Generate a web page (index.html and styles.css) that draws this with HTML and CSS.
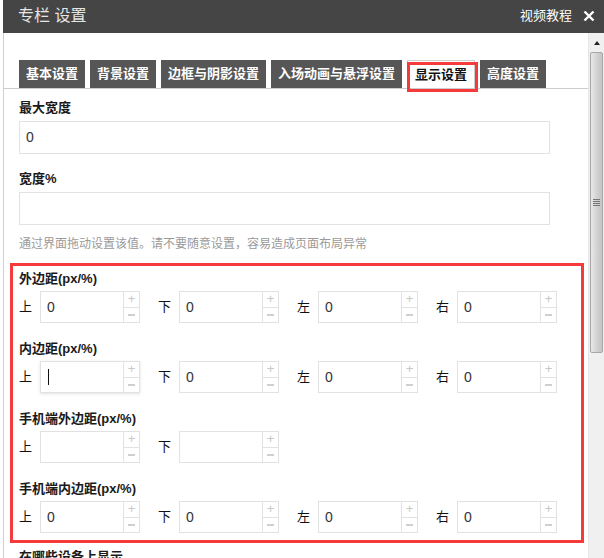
FILE: index.html
```html
<!DOCTYPE html>
<html>
    <head>
        <meta charset="utf-8">
        <link rel="stylesheet" href="styles.css">
    </head>

    <body>
        <div class="dialog">
            <div class="titlebar">
                <span class="title">专栏 设置</span>
                <span class="tools">
                    <span class="help-link">视频教程</span>
                    <svg class="close" width="12" height="12" viewBox="0 0 12 12">
                        <path d="M1.5 1.5 L10.5 10.5 M10.5 1.5 L1.5 10.5" stroke="#fff" stroke-width="2.4" fill="none"/>
                    </svg>
                </span>
            </div>

            <div class="main">
                <div class="content">
                    <div class="tabs">
                        <span class="tab">基本设置</span>
                        <span class="tab">背景设置</span>
                        <span class="tab">边框与阴影设置</span>
                        <span class="tab">入场动画与悬浮设置</span>
                        <span class="tab active">显示设置</span>
                        <span class="tab">高度设置</span>
                    </div>

                    <div class="form">
                        <div class="field">
                            <label>最大宽度</label>
                            <div class="text-input">0</div>
                        </div>
                        <div class="field">
                            <label>宽度%</label>
                            <div class="text-input"></div>
                            <div class="helptext">通过界面拖动设置该值。请不要随意设置，容易造成页面布局异常</div>
                        </div>

                        <div class="marked">
                            <div class="group">
                                <label>外边距(px/%)</label>
                                <div class="spin-row">
                                    <span class="side">上</span><div class="spin"><span class="val">0</span><span class="btns"><span class="plus">+</span><span class="minus"><i></i></span></span></div>
                                    <span class="side">下</span><div class="spin"><span class="val">0</span><span class="btns"><span class="plus">+</span><span class="minus"><i></i></span></span></div>
                                    <span class="side">左</span><div class="spin"><span class="val">0</span><span class="btns"><span class="plus">+</span><span class="minus"><i></i></span></span></div>
                                    <span class="side">右</span><div class="spin"><span class="val">0</span><span class="btns"><span class="plus">+</span><span class="minus"><i></i></span></span></div>
                                </div>
                            </div>
                            <div class="group">
                                <label>内边距(px/%)</label>
                                <div class="spin-row">
                                    <span class="side">上</span><div class="spin focused"><span class="val"><b class="caret"></b></span><span class="btns"><span class="plus">+</span><span class="minus"><i></i></span></span></div>
                                    <span class="side">下</span><div class="spin"><span class="val">0</span><span class="btns"><span class="plus">+</span><span class="minus"><i></i></span></span></div>
                                    <span class="side">左</span><div class="spin"><span class="val">0</span><span class="btns"><span class="plus">+</span><span class="minus"><i></i></span></span></div>
                                    <span class="side">右</span><div class="spin"><span class="val">0</span><span class="btns"><span class="plus">+</span><span class="minus"><i></i></span></span></div>
                                </div>
                            </div>
                            <div class="group">
                                <label>手机端外边距(px/%)</label>
                                <div class="spin-row">
                                    <span class="side">上</span><div class="spin"><span class="val"></span><span class="btns"><span class="plus">+</span><span class="minus"><i></i></span></span></div>
                                    <span class="side">下</span><div class="spin"><span class="val"></span><span class="btns"><span class="plus">+</span><span class="minus"><i></i></span></span></div>
                                </div>
                            </div>
                            <div class="group">
                                <label>手机端内边距(px/%)</label>
                                <div class="spin-row">
                                    <span class="side">上</span><div class="spin"><span class="val">0</span><span class="btns"><span class="plus">+</span><span class="minus"><i></i></span></span></div>
                                    <span class="side">下</span><div class="spin"><span class="val">0</span><span class="btns"><span class="plus">+</span><span class="minus"><i></i></span></span></div>
                                    <span class="side">左</span><div class="spin"><span class="val">0</span><span class="btns"><span class="plus">+</span><span class="minus"><i></i></span></span></div>
                                    <span class="side">右</span><div class="spin"><span class="val">0</span><span class="btns"><span class="plus">+</span><span class="minus"><i></i></span></span></div>
                                </div>
                            </div>
                        </div>

                        <div class="field last">
                            <label>在哪些设备上显示</label>
                        </div>
                    </div>
                </div>

                <div class="scrollbar">
                    <span class="arrow-up"></span>
                    <div class="thumb">
                        <span class="grip"></span>
                    </div>
                </div>
            </div>
        </div>
    </body>
</html>
```

FILE: styles.css
```css
html, body {
    margin: 0;
    height: 100%;
    overflow: hidden;
    background: #fff;
}

body {
    font-family: "Liberation Sans", "Noto Sans CJK SC", sans-serif;
    font-size: 13px;
    color: #222;
}

.dialog {
    margin-left: 3px;
    height: 558px;
    display: flex;
    flex-direction: column;
}

.titlebar {
    height: 33px;
    box-sizing: border-box;
    flex: none;
    background: #454545;
    display: flex;
    align-items: center;
    justify-content: space-between;
    padding: 0 9px 2px 15px;
}

.title {
    font-size: 16px;
    color: #e6e6e6;
    line-height: 20px;
}

.tools {
    display: flex;
    align-items: center;
    gap: 11px;
}

.help-link {
    font-size: 13px;
    color: #fff;
    line-height: 18px;
}

.close {
    display: block;
}

.main {
    flex: 1;
    display: flex;
    min-height: 0;
}

.content {
    flex: 1;
    border-left: 1px solid #cfcfcf;
    overflow: hidden;
}

.tabs {
    margin-top: 27px;
    padding-left: 15px;
    display: flex;
    gap: 5px;
    border-bottom: 1px solid #cccccc;
}

.tab {
    height: 28px;
    line-height: 28px;
    padding: 0 7px;
    background: #565656;
    color: #fff;
    font-weight: bold;
    font-size: 13px;
}

.tab.active {
    position: relative;
    background: #fff;
    color: #111;
    height: 28px;
    line-height: 27px;
    border: 1px solid #cccccc;
    border-bottom: none;
    margin-bottom: -1px;
    box-sizing: border-box;
    margin-top: 0;
}

/* red highlight round the selected tab */
.tab.active::after {
    content: "";
    position: absolute;
    left: -1px;
    right: -4px;
    top: 1px;
    bottom: -4px;
    border: 3px solid #f43a3a;
}

.form {
    padding: 0 15px;
}

label {
    display: block;
    font-weight: bold;
    font-size: 13px;
    line-height: 18px;
    color: #1a1a1a;
}

.field label {
    margin-top: 10px;
}

.field + .field label {
    margin-top: 16px;
}

.text-input {
    margin-top: 4px;
    width: 531px;
    height: 33px;
    box-sizing: border-box;
    border: 1px solid #e2e2e2;
    padding-left: 6px;
    line-height: 31px;
    font-size: 14px;
    color: #333;
}

.helptext {
    margin-top: 10px;
    font-size: 12px;
    line-height: 18px;
    color: #9a9a9a;
}

.marked {
    margin: 10px -11px 0 -9px;
    border: 3px solid #f43a3a;
    padding: 4px 0 7px 6px;
}

.group + .group {
    margin-top: 17px;
}

.spin-row {
    margin-top: 3px;
    display: flex;
    align-items: center;
}

.side {
    width: 13px;
    margin-right: 8px;
    font-size: 13px;
    line-height: 18px;
    color: #111;
}

.spin {
    width: 100px;
    height: 32px;
    box-sizing: border-box;
    border: 1px solid #e2e2e2;
    margin-right: 18px;
    display: flex;
}

.spin.focused {
    box-shadow: 0 1px 3px rgba(0, 0, 0, 0.12);
}

.val {
    flex: 1;
    padding-left: 6px;
    line-height: 30px;
    font-size: 14px;
    color: #333;
    display: flex;
    align-items: center;
}

.caret {
    width: 1px;
    height: 16px;
    background: #111;
    margin-left: 1px;
}

.btns {
    width: 15px;
    border-left: 1px solid #e2e2e2;
    display: flex;
    flex-direction: column;
}

.plus, .minus {
    flex: 1;
    display: flex;
    align-items: center;
    justify-content: center;
    color: #c8c8c8;
    font-size: 13px;
    line-height: 14px;
}

.plus {
    border-bottom: 1px solid #e2e2e2;
}

.minus i {
    display: block;
    width: 7px;
    height: 2px;
    background: #cfcfcf;
}

.field.last label {
    margin-top: 5px;
}

.scrollbar {
    width: 16px;
    flex: none;
    background: #f0f0f0;
    border-left: 1px solid #e6e6e6;
    box-sizing: border-box;
    display: flex;
    flex-direction: column;
    align-items: center;
}

.arrow-up {
    margin-top: 8px;
    width: 0;
    height: 0;
    border-left: 3px solid transparent;
    border-right: 3px solid transparent;
    border-bottom: 4px solid #222;
}

.thumb {
    margin-top: 7px;
    width: 13px;
    height: 301px;
    box-sizing: border-box;
    border: 1px solid #a8a8a8;
    border-radius: 2px;
    background: linear-gradient(to right, #e8e8e8, #d0d0d0 60%, #c4c4c4);
    display: flex;
    align-items: center;
    justify-content: center;
}

.grip {
    width: 7px;
    height: 7px;
    background: repeating-linear-gradient(to bottom, #777 0, #777 1px, transparent 1px, transparent 2px);
}
```
